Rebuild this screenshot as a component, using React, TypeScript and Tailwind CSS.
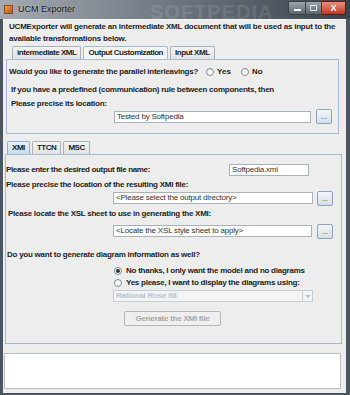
const font = { fontFamily: '"Liberation Sans", Arial, sans-serif' };

const Dots = () => (
  <div className="w-[16px] h-[15px] rounded-[2px] border border-[#8fa2b8] bg-gradient-to-b from-[#f4f7fa] to-[#d5dee8] flex items-end justify-center pb-[3px] text-[7px] leading-none text-[#333]">
    ...
  </div>
);

const Field = ({ value, w }: { value: string; w: string }) => (
  <div className={`${w} h-[12px] bg-white border border-[#a9b3bd] flex items-center pl-[2px] text-[8px] text-[#333] tracking-[-0.2px] whitespace-nowrap overflow-hidden`}>
    {value}
  </div>
);

const Radio = ({ checked }: { checked?: boolean }) => (
  <div className="w-[8px] h-[8px] rounded-full border border-[#7f8b96] bg-gradient-to-b from-[#eef1f4] to-white flex items-center justify-center shrink-0">
    {checked && <div className="w-[4px] h-[4px] rounded-full bg-[#2a2f36]" />}
  </div>
);

const Label = ({ children, cls = '' }: { children: React.ReactNode; cls?: string }) => (
  <div className={`h-[10px] flex items-center font-bold text-[8px] text-[#1e1e1e] tracking-[-0.25px] whitespace-nowrap ${cls}`}>
    {children}
  </div>
);

const Tab = ({ label, active, blue }: { label: string; active?: boolean; blue?: boolean }) => (
  <div
    className={`h-[13px] px-[4px] flex items-center border border-b-0 rounded-t-[2px] font-bold text-[8px] tracking-[-0.45px] whitespace-nowrap text-[#1e1e1e] ${
      blue
        ? 'border-[#8fb0d4] bg-gradient-to-b from-[#e6f0fa] to-[#c6dbf0]'
        : active
        ? 'border-[#a6bad2] bg-[#f5f5f5]'
        : 'border-[#a9b0b8] bg-gradient-to-b from-[#f3f3f3] to-[#e2e2e2]'
    }`}
  >
    {label}
  </div>
);

export default function App() {
  return (
    <div className="w-[350px] h-[395px] flex flex-col bg-[#4c5663] overflow-hidden" style={font}>
      {/* title bar */}
      <div className="relative h-[19px] flex items-center bg-gradient-to-r from-[#a4aab0] via-[#6d7680] to-[#3b424b] shrink-0">
        <div className="ml-[4px] w-[9px] h-[9px] bg-gradient-to-br from-[#f0a040] to-[#c05020] border border-[#8a4a20]" />
        <span className="ml-[5px] text-[9px] text-[#111] [text-shadow:0_0_2px_rgba(255,255,255,0.5)]">UCM Exporter</span>
        <span className="absolute left-[150px] top-[-3px] text-[20px] font-bold tracking-[1px] text-white/10">SOFTPEDIA</span>
        <div className="absolute right-[4px] top-[1px] flex">
          <div className="w-[18px] h-[14px] rounded-bl-[3px] border border-[#3a4048] bg-gradient-to-b from-[#9ea6ae] to-[#5c646e] flex items-end justify-center pb-[3px]">
            <div className="w-[7px] h-[2px] bg-white" />
          </div>
          <div className="w-[16px] h-[14px] border border-l-0 border-[#3a4048] bg-gradient-to-b from-[#9ea6ae] to-[#5c646e] flex items-center justify-center">
            <div className="w-[7px] h-[6px] border border-white/80" />
          </div>
          <div className="w-[24px] h-[14px] rounded-br-[3px] border border-l-0 border-[#5a1a10] bg-gradient-to-b from-[#e89080] to-[#c0341c] flex items-center justify-center text-white text-[9px] font-bold leading-none">
            X
          </div>
        </div>
      </div>

      {/* client area */}
      <div className="flex-1 ml-[3px] mr-[4px] mb-[2px] bg-[#ededed] border-t border-[#f8f8f8] flex flex-col">
        <div className="pl-[6px] pt-[1px] font-bold text-[8px] leading-[12px] text-[#1e1e1e] tracking-[-0.2px]">
          <div className="whitespace-nowrap">UCMExporter will generate an intermediate XML document that will be used as input to the</div>
          <div>available transformations below.</div>
        </div>

        {/* first tabbed pane */}
        <div className="mt-[1px] ml-[3px] w-[333px] flex flex-col">
          <div className="flex gap-[2px] pl-[6px]">
            <Tab label="intermediate XML" />
            <Tab label="Output Customization" active />
            <Tab label="Input XML" />
          </div>
          <div className="h-[75px] border border-[#a6bad2] flex flex-col">
            <div className="mt-[6px] h-[12px] flex items-center">
              <Label cls="pl-[2px]">Would you like to generate the parallel interleavings?</Label>
              <div className="ml-[8px] flex items-center gap-[3px]">
                <Radio />
                <span className="font-bold text-[8px] text-[#1e1e1e]">Yes</span>
              </div>
              <div className="ml-[10px] flex items-center gap-[3px]">
                <Radio />
                <span className="font-bold text-[8px] text-[#1e1e1e]">No</span>
              </div>
            </div>
            <Label cls="mt-[7px] pl-[4px]">If you have a predefined (communication) rule between components, then</Label>
            <Label cls="mt-[4px] pl-[4px]">Please precise its location:</Label>
            <div className="h-[15px] flex items-center pl-[107px]">
              <Field value="Tested by Softpedia" w="w-[197px]" />
              <div className="ml-[5px]">
                <Dots />
              </div>
            </div>
          </div>
        </div>

        {/* second tabbed pane */}
        <div className="mt-[7px] ml-[2px] w-[337px] flex flex-col">
          <div className="flex gap-[2px] pl-[2px]">
            <Tab label="XMI" blue />
            <Tab label="TTCN" />
            <Tab label="MSC" />
          </div>
          <div className="h-[190px] border border-[#a6bad2] flex flex-col">
            <div className="mt-[8px] h-[14px] flex items-center">
              <Label cls="pl-[0px] w-[223px] tracking-[-0.35px]">Please enter the desired output file name:</Label>
              <Field value="Softpedia.xmi" w="w-[80px]" />
            </div>
            <Label cls="mt-[3px]">Please precise the location of the resulting XMI file:</Label>
            <div className="h-[16px] flex items-center pl-[107px]">
              <Field value="<Please select the output directory>" w="w-[200px]" />
              <div className="ml-[4px]">
                <Dots />
              </div>
            </div>
            <Label cls="mt-[3px] pl-[2px]">Please locate the XSL sheet to use in generating the XMI:</Label>
            <div className="mt-[4px] h-[16px] flex items-center pl-[107px]">
              <Field value="<Locate the XSL style sheet to apply>" w="w-[199px]" />
              <div className="ml-[5px]">
                <Dots />
              </div>
            </div>
            <Label cls="mt-[11px] pl-[1px]">Do you want to generate diagram information as well?</Label>
            <div className="mt-[5px] h-[12px] flex items-center pl-[108px] gap-[4px]">
              <Radio checked />
              <span className="font-bold text-[8px] text-[#1e1e1e] tracking-[-0.25px] whitespace-nowrap">No thanks, I only want the model and no diagrams</span>
            </div>
            <div className="h-[12px] flex items-center pl-[108px] gap-[4px]">
              <Radio />
              <span className="font-bold text-[8px] text-[#1e1e1e] tracking-[-0.25px] whitespace-nowrap">Yes please, I want to display the diagrams using:</span>
            </div>
            <div className="mt-[1px] pl-[107px]">
              <div className="w-[200px] h-[12px] border border-[#c4ccd4] bg-[#f4f4f4] flex">
                <div className="flex-1 pl-[2px] flex items-center font-bold text-[8px] text-[#b4c4d8] tracking-[-0.25px]">Rational Rose 98</div>
                <div className="w-[10px] border-l border-[#c4ccd4] flex items-center justify-center">
                  <div className="w-0 h-0 border-l-[3px] border-r-[3px] border-t-[3px] border-l-transparent border-r-transparent border-t-[#b8c2cc]" />
                </div>
              </div>
            </div>
            <div className="mt-[9px] pl-[118px]">
              <div className="w-[97px] h-[15px] border border-[#b6b6b6] rounded-[2px] bg-[#efefef] flex items-center justify-center font-bold text-[8px] text-[#a8a8a8] tracking-[-0.25px]">
                Generate the XMI file
              </div>
            </div>
          </div>
        </div>

        {/* output area */}
        <div className="mt-[9px] ml-[1px] w-[337px] h-[36px] bg-white border border-[#b9c0c7]" />
      </div>
    </div>
  );
}
